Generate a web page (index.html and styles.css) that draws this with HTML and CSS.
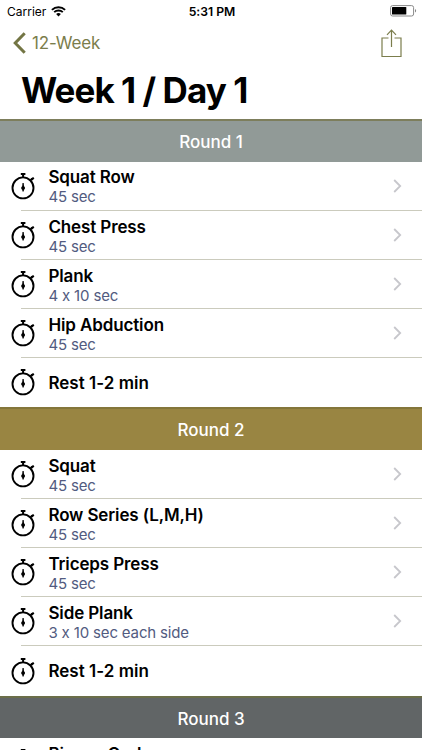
FILE: index.html
```html
<!DOCTYPE html>
<html lang="en">
<head>
    <meta charset="UTF-8">
    <meta name="viewport" content="width=device-width, initial-scale=1.0">
    <title>Week 1 / Day 1</title>
    <link rel="stylesheet" href="styles.css">
</head>
<body>
    <svg class="defs" width="0" height="0">
        <symbol id="stopwatch" viewBox="0 0 24 28">
            <circle cx="12" cy="15.9" r="10.5" fill="none" stroke="#000" stroke-width="1.9"/>
            <path d="M9.8 1.9h4.6M12.1 2v4M19.2 8.6l2-2" fill="none" stroke="#000" stroke-width="2"/>
            <path d="M19.7 6.6l2.5-1.7 1.2 1.5-2 2.1z"/>
            <path d="M11.5 11h1.2l.3 3.2a2.1 2.1 0 0 1 0 3.6l-.3 1.8h-1.2l-.3-1.8a2.1 2.1 0 0 1 0-3.6z"/>
        </symbol>
        <symbol id="chevron" viewBox="0 0 9 14">
            <path d="M1.2 1l6 6-6 6" fill="none" stroke="#c7c7cc" stroke-width="1.8"/>
        </symbol>
    </svg>

    <div class="status-bar">
        <div class="carrier">
            <span>Carrier</span>
            <svg width="15" height="11" viewBox="0 0 15 11">
                <path d="M.9 3.9a9.4 9.4 0 0 1 13.2 0M3.2 6.2a6.1 6.1 0 0 1 8.6 0" fill="none" stroke="#000" stroke-width="1.9"/>
                <path d="M7.5 10.6L5.1 8.1a3.4 3.4 0 0 1 4.8 0z"/>
            </svg>
        </div>
        <div class="time">5:31 PM</div>
        <svg class="battery" width="27" height="12" viewBox="0 0 27 12">
            <rect x=".6" y=".6" width="23" height="10.4" rx="2" fill="none" stroke="#888"/>
            <rect x="2" y="2" width="14.3" height="7.6" rx=".6"/>
            <path d="M25 4v3.6a2 2 0 0 0 0-3.6z" fill="#888"/>
        </svg>
    </div>

    <div class="nav-bar">
        <a class="back">
            <svg width="13" height="22" viewBox="0 0 13 22">
                <path d="M11.7 1.3L2.2 11l9.5 9.7" fill="none" stroke="#737544" stroke-width="3"/>
            </svg>
            <span>12-Week</span>
        </a>
        <svg class="share" width="21" height="29" viewBox="0 0 21 29">
            <path d="M7.5 9H1v18.5h19V9h-6.5M10.5 18V1.5M6 5.8l4.5-4.6L15 5.8" fill="none" stroke="#7b7d4c" stroke-width="1.2"/>
        </svg>
    </div>

    <h1>Week 1 / Day 1</h1>

    <div class="round gray">Round 1</div>
    <div class="list">
        <div class="row">
            <svg class="watch"><use href="#stopwatch"/></svg>
            <div class="info">
                <div class="name">Squat Row</div>
                <div class="detail">45 sec</div>
            </div>
            <svg class="arrow"><use href="#chevron"/></svg>
        </div>
        <div class="row">
            <svg class="watch"><use href="#stopwatch"/></svg>
            <div class="info">
                <div class="name">Chest Press</div>
                <div class="detail">45 sec</div>
            </div>
            <svg class="arrow"><use href="#chevron"/></svg>
        </div>
        <div class="row">
            <svg class="watch"><use href="#stopwatch"/></svg>
            <div class="info">
                <div class="name">Plank</div>
                <div class="detail">4 x 10 sec</div>
            </div>
            <svg class="arrow"><use href="#chevron"/></svg>
        </div>
        <div class="row">
            <svg class="watch"><use href="#stopwatch"/></svg>
            <div class="info">
                <div class="name">Hip Abduction</div>
                <div class="detail">45 sec</div>
            </div>
            <svg class="arrow"><use href="#chevron"/></svg>
        </div>
        <div class="row">
            <svg class="watch"><use href="#stopwatch"/></svg>
            <div class="info">
                <div class="name rest">Rest 1-2 min</div>
            </div>
        </div>
    </div>

    <div class="round gold">Round 2</div>
    <div class="list">
        <div class="row">
            <svg class="watch"><use href="#stopwatch"/></svg>
            <div class="info">
                <div class="name">Squat</div>
                <div class="detail">45 sec</div>
            </div>
            <svg class="arrow"><use href="#chevron"/></svg>
        </div>
        <div class="row">
            <svg class="watch"><use href="#stopwatch"/></svg>
            <div class="info">
                <div class="name">Row Series (L,M,H)</div>
                <div class="detail">45 sec</div>
            </div>
            <svg class="arrow"><use href="#chevron"/></svg>
        </div>
        <div class="row">
            <svg class="watch"><use href="#stopwatch"/></svg>
            <div class="info">
                <div class="name">Triceps Press</div>
                <div class="detail">45 sec</div>
            </div>
            <svg class="arrow"><use href="#chevron"/></svg>
        </div>
        <div class="row">
            <svg class="watch"><use href="#stopwatch"/></svg>
            <div class="info">
                <div class="name">Side Plank</div>
                <div class="detail">3 x 10 sec each side</div>
            </div>
            <svg class="arrow"><use href="#chevron"/></svg>
        </div>
        <div class="row">
            <svg class="watch"><use href="#stopwatch"/></svg>
            <div class="info">
                <div class="name rest">Rest 1-2 min</div>
            </div>
        </div>
    </div>

    <div class="round dark">Round 3</div>
    <div class="list">
        <div class="row">
            <svg class="watch"><use href="#stopwatch"/></svg>
            <div class="info">
                <div class="name">Biceps Curl</div>
                <div class="detail">45 sec</div>
            </div>
            <svg class="arrow"><use href="#chevron"/></svg>
        </div>
    </div>
</body>
</html>
```
FILE: styles.css
```css
* {
    box-sizing: border-box;
}

body {
    margin: 0;
    height: 750px;
    overflow: hidden;
    background-color: #fff;
    color: #000;
    font-family: Inter, Roboto, sans-serif;
    font-feature-settings: "calt" 0;
}

.defs {
    position: absolute;
}

.status-bar {
    display: grid;
    grid-template-columns: 1fr auto 1fr;
    align-items: center;
    height: 22px;
    padding: 0 5px 0 7px;
    font-size: 12px;
}

.carrier {
    display: flex;
    align-items: center;
    gap: 5px;
}

.time {
    font-size: 12.2px;
    font-weight: 600;
}

.battery {
    justify-self: end;
}

.nav-bar {
    display: flex;
    justify-content: space-between;
    align-items: center;
    height: 42px;
    padding: 0 20px 0 13px;
}

.back {
    display: flex;
    align-items: center;
    gap: 6px;
    color: #7b7d4c;
    font-size: 17px;
    letter-spacing: -0.15px;
}

h1 {
    margin: 0;
    height: 55px;
    padding-left: 21px;
    font-size: 35px;
    font-weight: 700;
    line-height: 53px;
    letter-spacing: -0.95px;
}

.round {
    height: 42.6px;
    border-top: 2px solid #7d7e5c;
    color: #fff;
    font-size: 17px;
    font-weight: 500;
    line-height: 42px;
    text-align: center;
}

.gray {
    background-color: #919a97;
}

.gold {
    background-color: #998542;
    border-top-color: #84763a;
}

.dark {
    background-color: #616566;
    border-top-color: #6b6e49;
}

.row {
    position: relative;
    display: flex;
    align-items: center;
    height: 49.15px;
    padding: 0 20px 0 11px;
}

.row:not(:last-child)::after {
    content: "";
    position: absolute;
    left: 21px;
    right: 0;
    bottom: 0;
    height: 1px;
    background-color: #cbcbbd;
}

.watch {
    width: 24px;
    height: 28px;
    margin: 0 13.4px 1px 0;
}

.info {
    flex: 1;
    padding-top: 1.6px;
}

.name {
    font-size: 17px;
    font-weight: 600;
    line-height: 21px;
    letter-spacing: -0.12px;
}

.rest {
    letter-spacing: 0.02px;
}

.detail {
    color: #525b80;
    font-size: 15px;
    line-height: 18px;
    letter-spacing: -0.15px;
}

.arrow {
    width: 9px;
    height: 14px;
    margin-bottom: 1px;
}
```
